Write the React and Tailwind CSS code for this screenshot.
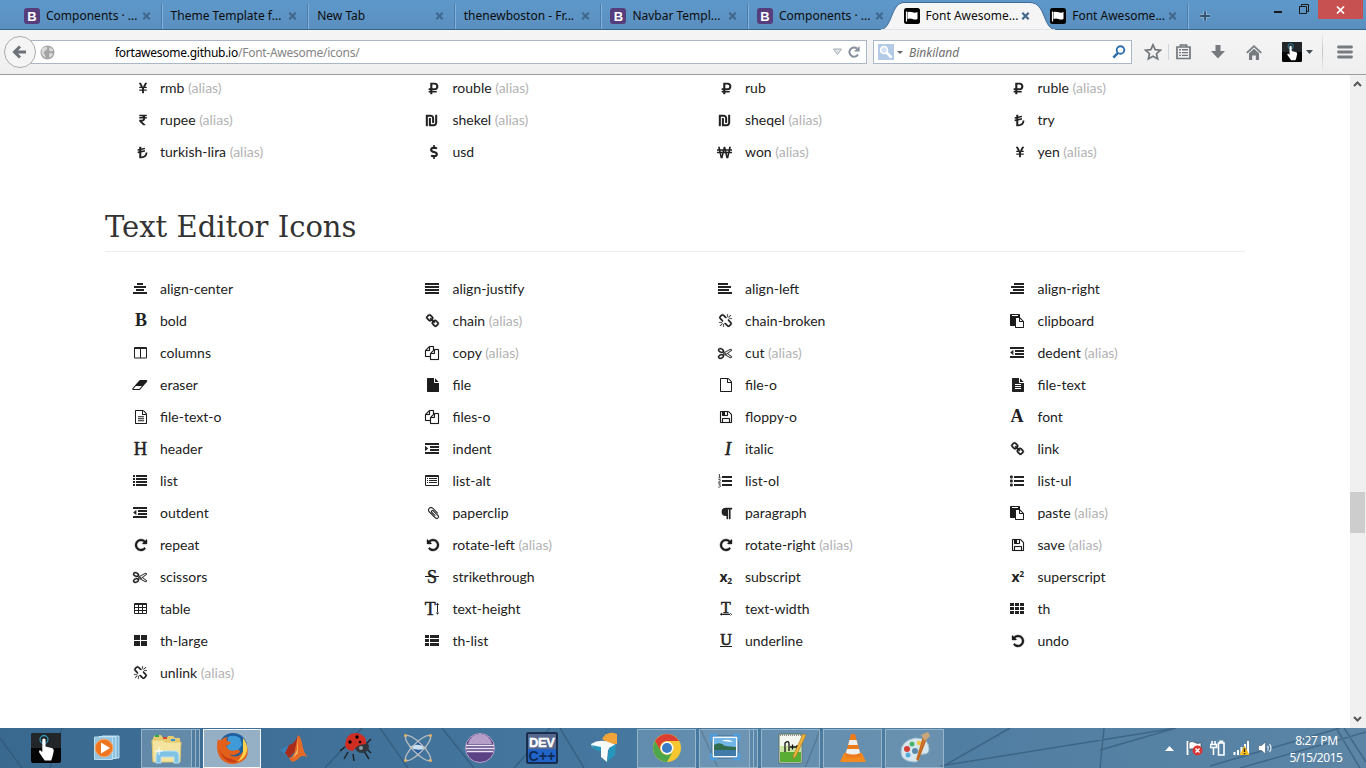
import React from "react";
import { FaYenSign, FaRubleSign, FaRupeeSign, FaShekelSign, FaLiraSign, FaDollarSign, FaWonSign, FaParagraph } from "react-icons/fa";

/* ---------- list glyphs, drawn in a 14 x 14 box ---------- */

const Box = ({ children }) => (
  <svg width="14" height="14" viewBox="0 0 14 14" className="block shrink-0 overflow-visible" fill="#222">
    {children}
  </svg>
);

const Big = ({ d, dx = 0, heavy = 0 }) => (
  <svg width="14" height="14" viewBox="0 0 1792 1792" className="block shrink-0 overflow-visible" fill="#1c1c1c" stroke="#1c1c1c" strokeWidth={heavy}>
    <path d={d} transform={`translate(${dx} 0)`} />
  </svg>
);

const Bars = ({ rows, children }) => (
  <Box>
    {rows.map(([x, w], i) => (
      <rect key={i} x={x} y={1 + i * 3} width={w} height="2" />
    ))}
    {children}
  </Box>
);

const Serif = ({ t, size = 15, x = 14, y = 12, weight = "bold", style = "normal", heavy = 0, children }) => (
  <Box>
    <text x={x} y={y} textAnchor="end" fontFamily="Liberation Serif, serif" fontSize={size} fontWeight={weight} fontStyle={style} stroke="#222" strokeWidth={heavy}>
      {t}
    </text>
    {children}
  </Box>
);

const Script = ({ small, dy }) => (
  <Box>
    <text x="1.6" y="11.5" fontFamily="Open Sans, sans-serif" fontSize="14" fontWeight="bold">x</text>
    <text x="9.2" y={dy} fontFamily="Open Sans, sans-serif" fontSize="8.500" fontWeight="bold">{small}</text>
  </Box>
);

const P = {
  file: "M1152 512v-472q22 14 36 28l408 408q14 14 28 36h-472zm-128 32q0 40 28 68t68 28h544v1056q0 40-28 68t-68 28h-1344q-40 0-68-28t-28-68v-1600q0-40 28-68t68-28h800v544z",
  fileO: "M1596 380q28 28 48 76t20 88v1152q0 40-28 68t-68 28h-1344q-40 0-68-28t-28-68v-1600q0-40 28-68t68-28h896q40 0 88 20t76 48zm-444-244v376h376q-10-29-22-41l-313-313q-12-12-41-22zm384 1528v-1024h-416q-40 0-68-28t-28-68v-416h-768v1536h1280z",
  lines: "M512 800h768v128h-768zM512 1056h768v128h-768zM512 1312h768v128h-768z",
  floppy: "M512 1536h768v-384h-768v384zm896 0h128v-896q0-14-10-38.5t-20-34.5l-281-281q-10-10-34-20t-39-10v416q0 40-28 68t-68 28h-576q-40 0-68-28t-28-68v-416h-128v1280h128v-416q0-40 28-68t68-28h832q40 0 68 28t28 68v416zm-384-928v-320q0-13-9.5-22.5t-22.5-9.5h-192q-13 0-22.5 9.5t-9.5 22.5v320q0 13 9.5 22.5t22.5 9.5h192q13 0 22.5-9.5t9.5-22.5zm640 32v928q0 40-28 68t-68 28h-1344q-40 0-68-28t-28-68v-1344q0-40 28-68t68-28h928q40 0 88 20t76 48l280 280q28 28 48 76t20 88z",
  chain: "M1520 1216q0-40-28-68l-208-208q-28-28-68-28-42 0-72 32 3 3 19 18.5t21.5 21.5 15 19 13 25.5 3.5 27.5q0 40-28 68t-68 28q-15 0-27.5-3.5t-25.5-13-19-15-21.5-21.5-18.5-19q-33 31-33 73 0 40 28 68l206 207q27 27 68 27 40 0 68-26l147-146q28-28 28-67zm-703-705q0-40-28-68l-206-207q-28-28-68-28-39 0-68 27l-147 146q-28 28-28 67 0 40 28 68l208 208q27 27 68 27 42 0 72-31-3-3-19-18.5t-21.5-21.5-15-19-13-25.5-3.5-27.5q0-40 28-68t68-28q15 0 27.5 3.5t25.5 13 19 15 21.5 21.5 18.5 19q33-31 33-73zm895 705q0 120-85 203l-147 146q-83 83-203 83-121 0-204-85l-206-207q-83-83-83-203 0-123 88-209l-88-88q-86 88-208 88-120 0-204-84l-208-208q-84-84-84-204t85-203l147-146q83-83 203-83 121 0 204 85l206 207q83 83 83 203 0 123-88 209l88 88q86-88 208-88 120 0 204 84l208 208q84 84 84 204z",
  broken: "M503 1271l-256 256q-10 9-23 9-12 0-23-9-9-10-9-23t9-23l256-256q10-9 23-9t23 9q9 10 9 23t-9 23zm169 41v320q0 14-9 23t-23 9-23-9-9-23v-320q0-14 9-23t23-9 23 9 9 23zm-224-224q0 14-9 23t-23 9h-320q-14 0-23-9t-9-23 9-23 23-9h320q14 0 23 9t9 23zm1264 128q0 120-85 203l-147 146q-83 83-203 83-121 0-204-85l-334-335q-21-21-42-56l239-18 273 274q28 28 68 28t68-27l147-146q28-28 28-67 0-40-28-68l-274-275 18-239q35 21 56 42l336 336q84 86 84 204zm-617-724l-239 18-273-274q-28-28-68-28-39 0-68 27l-147 146q-28 28-28 67 0 40 28 68l274 274-18 240q-35-21-56-42l-336-336q-84-86-84-204 0-120 85-203l147-146q83-83 203-83 121 0 204 85l334 335q21 21 42 56zm633 84q0 14-9 23t-23 9h-320q-14 0-23-9t-9-23 9-23 23-9h320q14 0 23 9t9 23zm-544-544v320q0 14-9 23t-23 9-23-9-9-23v-320q0-14 9-23t23-9 23 9 9 23zm407 151l-256 256q-11 9-23 9t-23-9q-9-10-9-23t9-23l256-256q10-9 23-9t23 9q9 10 9 23t-9 23z",
  copy: "M1696 384q40 0 68 28t28 68v1216q0 40-28 68t-68 28h-960q-40 0-68-28t-28-68v-288h-544q-40 0-68-28t-28-68v-672q0-40 20-88t48-76l408-408q28-28 76-48t88-20h416q40 0 68 28t28 68v328q68-40 128-40h416zm-544 213l-299 299h299v-299zm-640-384l-299 299h299v-299zm196 647l316-316v-416h-384v416q0 40-28 68t-68 28h-416v640h512v-256q0-40 20-88t48-76zm956 804v-1152h-384v416q0 40-28 68t-68 28h-416v640h896z",
  paste: "M768 1664h896v-640h-416q-40 0-68-28t-28-68v-416h-384v1152zm256-1440v-64q0-13-9.5-22.5t-22.5-9.5h-704q-13 0-22.5 9.5t-9.5 22.5v64q0 13 9.5 22.5t22.5 9.5h704q13 0 22.5-9.5t9.5-22.5zm256 672h299l-299-299v299zm512 128v672q0 40-28 68t-68 28h-960q-40 0-68-28t-28-68v-160h-544q-40 0-68-28t-28-68v-1344q0-40 28-68t68-28h1088q40 0 68 28t28 68v328q21 13 36 28l408 408q28 28 48 76t20 88z",
  eraser: "M960 1408l336-384h-768l-336 384h768zm1013-1077q15 34 9.5 71.5t-30.5 65.5l-896 1024q-38 44-96 44h-768q-38 0-69.5-20.5t-47.5-54.5q-15-34-9.5-71.5t30.5-65.5l896-1024q38-44 96-44h768q38 0 69.5 20.5t47.5 54.5z",
  cut: "M960 896q26 0 45 19t19 45-19 45-45 19-45-19-19-45 19-45 45-19zm300 64l507 398q28 20 25 56-5 35-35 51l-128 64q-13 7-29 7-17 0-31-8l-690-387-110 66q-8 4-12 5 14 49 10 97-7 77-56 147.5t-132 123.5q-132 84-277 84-136 0-222-78-90-84-79-207 7-76 56-147t131-124q132-84 278-84 83 0 151 31 9-13 22-22l122-73-122-73q-13-9-22-22-68 31-151 31-146 0-278-84-82-53-131-124t-56-147q-5-59 15.5-113t63.5-93q85-79 222-79 145 0 277 84 83 52 132 123t56 148q4 48-10 97 4 1 12 5l110 66 690-387q14-8 31-8 16 0 29 7l128 64q30 16 35 51 3 36-25 56zm-681-260q46-42 21-108t-106-117q-92-59-192-59-74 0-113 36-46 42-21 108t106 117q92 59 192 59 74 0 113-36zm-85 745q81-51 106-117t-21-108q-39-36-113-36-100 0-192 59-81 51-106 117t21 108q39 36 113 36 100 0 192-59zm178-613l96 58v-11q0-36 33-56l14-8-79-47-26 26q-3 3-10 11t-12 12q-2 2-4 3.5t-3 2.5zm224 224l96 32 736-576-128-64-768 431v113l-160 96 9 8q2 2 7 6 4 4 11 12t11 12l26 26zm704 416l128-64-520-408-177 138q-2 3-13 7z",
  clip: "M1596 1385q0 117-79 196t-196 79q-135 0-235-100l-777-776q-113-115-113-271 0-159 110-270t269-111q158 0 273 113l605 606q10 10 10 22 0 16-30.5 46.5t-46.5 30.5q-13 0-23-10l-606-607q-79-77-181-77-106 0-179 75t-73 181q0 105 76 181l776 777q63 63 145 63 64 0 106-42t42-106q0-82-63-145l-581-581q-26-24-60-24-29 0-48 19t-19 48q0 32 25 59l410 410q10 10 10 22 0 16-31 47t-47 31q-12 0-22-10l-410-410q-63-61-63-149 0-82 57-139t139-57q88 0 149 63l581 581q100 98 100 235z",
  repeat: "M1664 256v448q0 26-19 45t-45 19h-448q-42 0-59-40-17-39 14-69l138-138q-148-137-349-137-104 0-198.5 40.5t-163.5 109.5-109.5 163.5-40.5 198.5 40.5 198.5 109.5 163.5 163.5 109.5 198.5 40.5q119 0 225-52t179-147q7-10 23-12 15 0 25 9l137 138q9 8 9.5 20.5t-7.5 22.5q-109 132-264 204.5t-327 72.5q-156 0-298-61t-245-164-164-245-61-298 61-298 164-245 245-164 298-61q147 0 284.5 55.5t244.5 156.5l130-129q29-31 70-14 39 17 39 59z",
};

const Undo = () => (
  <svg width="14" height="14" viewBox="0 0 1792 1792" className="block shrink-0 overflow-visible" fill="#1c1c1c" stroke="#1c1c1c" strokeWidth="50">
    <path d={P.repeat} transform="translate(1920 0) scale(-1 1)" />
  </svg>
);

const full = [0, 14];
const ICONS = {
  yen: <FaYenSign size={12} className="-mr-[2px]" />,
  ruble: <FaRubleSign size={13} className="-mr-px" />,
  rupee: <FaRupeeSign size={12} className="-mr-[2px]" />,
  shekel: <FaShekelSign size={13} className="mr-px" />,
  lira: <FaLiraSign size={13} className="-mr-[2px]" />,
  usd: <FaDollarSign size={14} className="-mr-[2px]" />,
  won: <FaWonSign size={15} />,
  center: <Bars rows={[[4, 6], [1, 12], [3, 8], full]} />,
  justify: <Bars rows={[full, full, full, full]} />,
  left: <Bars rows={[[0, 10], [0, 13], [0, 11], full]} />,
  right: <Bars rows={[[4, 10], [1, 13], [3, 11], full]} />,
  bold: <Serif t="B" size={18} y={12} />,
  chain: <Big d={P.chain} dx={64} heavy={50} />,
  broken: <Big d={P.broken} dx={64} heavy={36} />,
  paste: <Big d={P.paste} />,
  columns: (
    <Box>
      <path fillRule="evenodd" d="M2 1H13Q14 1 14 2V11.5Q14 12.5 13 12.5H2Q1 12.5 1 11.5V2Q1 1 2 1ZM2 3V11.5H7V3ZM8 3V11.5H13V3Z" />
    </Box>
  ),
  copy: <Big d={P.copy} heavy={20} />,
  cut: <Big d={P.cut} heavy={40} />,
  outdent: (
    <Bars rows={[full, [5, 9], [5, 9], full]}>
      <path d="M3.4 3.8V9.2L0.2 6.5Z" />
    </Bars>
  ),
  indent: (
    <Bars rows={[full, [5, 9], [5, 9], full]}>
      <path d="M0 3.8V9.2L3.2 6.5Z" />
    </Bars>
  ),
  eraser: <Big d={P.eraser} dx={-160} />,
  file: <Big d={P.file} dx={128} />,
  fileO: <Big d={P.fileO} dx={128} />,
  fileTextO: <Big d={P.fileO + P.lines} dx={128} />,
  fileText: (
    <Box>
      <path transform="translate(1 0) scale(0.0078125)" d={P.file} />
      <path fill="#fff" transform="translate(1 -.2) scale(0.0078125)" d={P.lines} />
    </Box>
  ),
  floppy: <Big d={P.floppy} dx={128} heavy={16} />,
  font: <Serif t="A" size={18} y={12} x={13.6} />,
  header: <Serif t="H" size={18.5} weight="normal" x={14.2} y={13} heavy={0.5} />,
  italic: <Serif t="I" size={18} style="italic" weight="normal" x={13} y={13} heavy={0.7} />,
  list: (
    <Bars rows={[[3, 11], [3, 11], [3, 11], [3, 11]]}>
      {[1, 4, 7, 10].map((y) => <rect key={y} x="0" y={y} width="2" height="2" />)}
    </Bars>
  ),
  listAlt: (
    <Box>
      <path fillRule="evenodd" d="M1 1H13Q14 1 14 2V11Q14 12 13 12H1Q0 12 0 11V2Q0 1 1 1ZM1 3V11H13V3Z" />
      {[4, 6, 8].map((y) => <path key={y} d={`M2 ${y}h1v1h-1zM4 ${y}h8v1h-8z`} />)}
    </Box>
  ),
  listOl: (
    <Box>
      <path d="M4 2h10v2h-10zM4 6h10v2h-10zM4 10h10v2h-10z" />
      <path fill="none" stroke="#222" strokeWidth=".8" d="M.6.9 1.5.3V3.6M.4 3.8H2.8M.4 5.6Q2.6 4.8 2.4 6.2L.5 8.3H2.8M.3 9.8H2.4L1.4 11.2Q2.8 11.4 2.4 12.5 1.6 13.6.2 12.9" />
    </Box>
  ),
  listUl: (
    <Box>
      {[2, 6, 10].map((y) => (
        <g key={y}>
          <rect x="0" y={y - 0.4} width="2.8" height="2.8" rx="1" />
          <rect x="4" y={y} width="10" height="2" />
        </g>
      ))}
    </Box>
  ),
  clip: <Big d={P.clip} dx={192} heavy={20} />,
  paragraph: <FaParagraph size={13} className="-mr-px" />,
  repeat: <Big d={P.repeat} dx={128} heavy={50} />,
  undo: <Undo />,
  strike: (
    <Serif t="S" size={18} weight="normal" x={12} y={12.5} heavy={0.5}>
      <rect x="0" y="6" width="14" height="1" />
    </Serif>
  ),
  sub: <Script small="2" dy={13.5} />,
  sup: <Script small="2" dy={6.5} />,
  table: (
    <Box>
      <path fillRule="evenodd" d="M2 1H13Q14 1 14 2V11Q14 12 13 12H2Q1 12 1 11V2Q1 1 2 1ZM2 3V5H5V3ZM6 3V5H9V3ZM10 3V5H13V3ZM2 6V8H5V6ZM6 6V8H9V6ZM10 6V8H13V6ZM2 9V11H5V9ZM6 9V11H9V9ZM10 9V11H13V9Z" />
    </Box>
  ),
  textHeight: (
    <Serif t="T" size={18} weight="normal" x={10.7} y={12.5} heavy={0.5}>
      <path d="M12 2.500h1v8.500h-1zM12.500.7l1.600 2.400h-3.200zM12.500 12.800l1.600-2.400h-3.200z" />
    </Serif>
  ),
  textWidth: (
    <Serif t="T" size={16} weight="normal" x={12.900} y={10.500} heavy={0.5}>
      <path d="M3 11.700h10v1.200h-10zM1.700 12.200l2.200-1.500v3zM14.200 12.200l-2.200-1.500v3z" />
    </Serif>
  ),
  th: (
    <Box>
      {[1, 5, 9].map((y) => <path key={y} d={`M0 ${y}h4v3h-4zM5 ${y}h4v3h-4zM10 ${y}h4v3h-4z`} />)}
    </Box>
  ),
  thLarge: (
    <Box>
      <path d="M1 1h6v5h-6zM8 1h6v5h-6zM1 7h6v5h-6zM8 7h6v5h-6z" />
    </Box>
  ),
  thList: (
    <Box>
      {[1, 5, 9].map((y) => <path key={y} d={`M0 ${y}h4v3h-4zM5 ${y}h9v3h-9z`} />)}
    </Box>
  ),
  underline: (
    <Serif t="U" size={16} weight="normal" x={13.8} y={10.8} heavy={0.6}>
      <rect x="2" y="12" width="12" height="1" />
    </Serif>
  ),
};

const CURRENCY = [
  ["yen", "rmb", 1], ["ruble", "rouble", 1], ["ruble", "rub"], ["ruble", "ruble", 1],
  ["rupee", "rupee", 1], ["shekel", "shekel", 1], ["shekel", "sheqel", 1], ["lira", "try"],
  ["lira", "turkish-lira", 1], ["usd", "usd"], ["won", "won", 1], ["yen", "yen", 1],
];

const EDITOR = [
  ["center", "align-center"], ["justify", "align-justify"], ["left", "align-left"], ["right", "align-right"],
  ["bold", "bold"], ["chain", "chain", 1], ["broken", "chain-broken"], ["paste", "clipboard"],
  ["columns", "columns"], ["copy", "copy", 1], ["cut", "cut", 1], ["outdent", "dedent", 1],
  ["eraser", "eraser"], ["file", "file"], ["fileO", "file-o"], ["fileText", "file-text"],
  ["fileTextO", "file-text-o"], ["copy", "files-o"], ["floppy", "floppy-o"], ["font", "font"],
  ["header", "header"], ["indent", "indent"], ["italic", "italic"], ["chain", "link"],
  ["list", "list"], ["listAlt", "list-alt"], ["listOl", "list-ol"], ["listUl", "list-ul"],
  ["outdent", "outdent"], ["clip", "paperclip"], ["paragraph", "paragraph"], ["paste", "paste", 1],
  ["repeat", "repeat"], ["undo", "rotate-left", 1], ["repeat", "rotate-right", 1], ["floppy", "save", 1],
  ["cut", "scissors"], ["strike", "strikethrough"], ["sub", "subscript"], ["sup", "superscript"],
  ["table", "table"], ["textHeight", "text-height"], ["textWidth", "text-width"], ["th", "th"],
  ["thLarge", "th-large"], ["thList", "th-list"], ["underline", "underline"], ["undo", "undo"],
  ["broken", "unlink", 1],
];

const IconGrid = ({ items }) => (
  <ul className="ml-[115px] grid w-[1170px] grid-cols-[292px_293px_292px_293px] font-['Lato','Open_Sans',sans-serif] text-[14px] text-[#222]">
    {items.map(([icon, name, alias], i) => (
      <li key={i} className="flex h-8 items-center">
        <span className={`flex w-8 shrink-0 justify-end ${i % 2 ? "mr-[13.5px]" : "mr-[13px]"}`}>{ICONS[icon]}</span>
        <span className="whitespace-nowrap leading-5">
          {name}
          {alias && <span className="text-[#b3b3b3]"> (alias)</span>}
        </span>
      </li>
    ))}
  </ul>
);

/* ---------- browser chrome ---------- */

const BootstrapMark = () => (
  <span className="mr-[6px] flex h-4 w-4 shrink-0 items-center justify-center rounded-[3px] bg-[#563d7c] font-['Liberation_Sans',sans-serif] text-[13px] font-bold leading-none text-white">B</span>
);

const FlagMark = () => (
  <svg width="16" height="16" viewBox="0 0 16 16" className="mr-[6px] shrink-0">
    <rect width="16" height="16" rx="2.5" fill="#000" />
    <path d="M2.500 3.500v10" stroke="#fff" strokeWidth="1.200" />
    <path d="M3.500 4q2.500-.8 5 .2t5-.2v7q-2.500 1-5 0t-5 0z" fill="#fff" />
  </svg>
);

const Close = () => (
  <svg width="9" height="8" viewBox="0 0 9 8" className="shrink-0">
    <path d="M1.3 .8L7.7 7.2M7.7 .8L1.3 7.2" stroke="#41688c" strokeWidth="2.2" />
  </svg>
);

const TABS = [
  ["b", "Components · ..."], [null, "Theme Template f..."], [null, "New Tab"], [null, "thenewboston - Fr..."],
  ["b", "Navbar Templ..."], ["b", "Components · ..."], ["f", "Font Awesome..."], ["f", "Font Awesome..."],
];

const TabStrip = () => (
  <div className="relative flex h-[30px] border-b border-[#34648f] bg-gradient-to-b from-[#5e98ca] to-[#5a90c0] pl-[15px]">
    <svg width="180" height="30" viewBox="0 0 180 30" className="absolute left-[879px] top-0">
      <path d="M0 30C14 30 11 3 25 2.5H151C168 3 163 30 178 30Z" fill="#f5f5f5" stroke="#3c6c98" strokeWidth="1" />
      <path d="M2 30H176" stroke="#f5f5f5" strokeWidth="1.5" />
    </svg>
    {TABS.map(([icon, label], i) => (
      <div key={i} className="relative flex h-[29px] w-[146.6px] items-center pl-[9px] pr-[11px] pt-[3px]">
        {icon === "b" && <BootstrapMark />}
        {icon === "f" && <FlagMark />}
        <span className="flex-1 whitespace-nowrap text-[12px] leading-4 text-[#0c0c0c]">{label}</span>
        <Close />
        {i !== 5 && i !== 6 && <span className="absolute -right-px top-1 h-[25px] w-[2px] border-l border-[#4b7dab] bg-[#82b2dc]" />}
      </div>
    ))}
    <svg width="12" height="12" viewBox="0 0 12 12" className="ml-[11px] mt-[10px]">
      <path d="M6 1v10M1 6h10" stroke="#8fb6d8" strokeWidth="3.6" />
      <path d="M6 1.2v9.6M1.2 6h9.6" stroke="#35526e" strokeWidth="1.8" />
    </svg>
    <div className="ml-auto flex">
      <svg width="50" height="20" viewBox="0 0 50 20">
        <path d="M6 12h8" stroke="#1a1a1a" strokeWidth="2" />
        <path d="M31.5 6.500h7v7h-7zM33.500 6V4.500h7v7H39" fill="none" stroke="#1a1a1a" />
      </svg>
      <div className="mr-[3px] flex h-[19px] w-[45px] items-center justify-center bg-[#c75050]">
        <svg width="9" height="8" viewBox="0 0 9 8"><path d="M1 .5l7 7M8 .5l-7 7" stroke="#fff" strokeWidth="1.7" /></svg>
      </div>
    </div>
  </div>
);

const Hand = ({ size }) => (
  <svg width={size} height={size} viewBox="0 0 30 30" className="shrink-0">
    <rect width="30" height="30" rx="2" fill="#050505" />
    <path d="M0 2a2 2 0 012-2h26a2 2 0 012 2v13H0z" fill="#222629" />
    <circle cx="13" cy="6.5" r="4" fill="none" stroke="#2f8fae" strokeWidth="1.3" />
    <path d="M11.300 6.500q1.700-2 3.200 0v7l7 1.700q1.500.8 1.200 3l-1.300 5.800-1.200 3.500h-6.500l-5.500-8q-.8-2.200 1-2.300l2.100 1.800z" fill="#fff" />
  </svg>
);

const Toolbar = () => (
  <div className="flex h-[45px] items-center border-b border-[#9c9c9c] bg-gradient-to-b from-[#f5f5f5] to-[#efefef] pl-[4px]">
    <div className="relative z-10 flex h-8 w-8 shrink-0 items-center justify-center rounded-full border border-[#aaadb0] bg-[#f5f5f5]">
      <svg width="16" height="16" viewBox="0 0 16 16"><path d="M2 8h12M8 2.500L2.500 8 8 13.500" fill="none" stroke="#6d7278" strokeWidth="3" /></svg>
    </div>
    <div className="-ml-[5px] flex h-6 w-[836px] shrink-0 items-center border border-[#aab7c7] bg-white pl-[8px] pr-[6px]">
      <svg width="15" height="15" viewBox="0 0 15 15">
        <circle cx="7.5" cy="7.5" r="7" fill="#a4a4a4" />
        <path d="M2 3.500L6 1.500 7.500 3 6 5.500 3.500 7 4.500 9 6 13 2.500 10.500 1.500 7ZM9.500 2L13 4.500 13 6 10 6.500 9 4.500ZM9 8.500L12.500 8 12.500 10.500 9.500 13Z" fill="#dadada" />
      </svg>
      <span className="ml-[60px] flex-1 whitespace-nowrap pt-[2px] text-[12px] leading-4 tracking-[-0.26px] text-[#858585]"><span className="text-black">fortawesome.github.io</span>/Font-Awesome/icons/</span>
      <svg width="28" height="12" viewBox="0 0 28 12">
        <path d="M1.500 3h8l-4 5.500z" fill="#dfe3e8" stroke="#a3acb7" />
        <path d="M26 8.500A4.600 4.600 0 1125 2.600" fill="none" stroke="#85909c" strokeWidth="2" />
        <path d="M27.600 0v5.600h-5.600z" fill="#85909c" />
      </svg>
    </div>
    <div className="ml-[6px] flex h-6 w-[259px] shrink-0 items-center border border-[#aab7c7] bg-white pl-1 pr-[5px]">
      <svg width="16" height="16" viewBox="0 0 16 16">
        <rect width="16" height="16" fill="#b4cbe8" />
        <circle cx="6" cy="6" r="3.5" fill="#d3e2f5" stroke="#fff" strokeWidth="1.5" />
        <path d="M8.500 8.500l5 5" stroke="#fff" strokeWidth="2.5" />
      </svg>
      <svg width="6" height="3" viewBox="0 0 6 3" className="ml-[3px]"><path d="M0 0h6L3 3z" fill="#666" /></svg>
      <span className="ml-[6px] flex-1 pt-[2px] text-[12px] italic leading-4 text-[#6e6e6e]">Binkiland</span>
      <svg width="14" height="14" viewBox="0 0 14 14">
        <circle cx="8.5" cy="5" r="3.8" fill="none" stroke="#2c6fae" strokeWidth="1.9" />
        <path d="M6 7.800L1.300 12.600" stroke="#2c6fae" strokeWidth="2.5" />
      </svg>
    </div>
    <svg width="18" height="18" viewBox="0 0 18 18" className="ml-[12px] shrink-0">
      <path d="M9 1.800l2.200 4.800 5.200.6-3.900 3.500 1.100 5.200L9 13.300l-4.600 2.600 1.100-5.200L1.600 7.200l5.200-.6z" fill="none" stroke="#72777c" strokeWidth="1.7" />
    </svg>
    <span className="ml-[6px] h-4 w-px bg-[#cdd5de]" />
    <svg width="15" height="16" viewBox="0 0 15 16" className="ml-[7px] shrink-0">
      <path d="M1 3h13v11.500H1zM4.500 3V1h6v2" fill="none" stroke="#72777c" strokeWidth="1.7" />
      <path d="M3 5.800h2M6 5.800h6M3 8.600h2M6 8.600h6M3 11.400h2M6 11.400h6" stroke="#72777c" strokeWidth="1.4" />
    </svg>
    <svg width="14" height="14" viewBox="0 0 14 14" className="ml-[20px] shrink-0"><path d="M4.500 0h5v6H14L7 13.500 0 6h4.500z" fill="#777b80" /></svg>
    <svg width="16" height="15" viewBox="0 0 16 15" className="ml-[21px] shrink-0">
      <path d="M.8 7.800L8 1.200l7.200 6.600" fill="none" stroke="#777b80" strokeWidth="1.8" />
      <path d="M3 8.200L8 3.800l5 4.400V15H9.800v-4.500H6.200V15H3z" fill="#777b80" />
    </svg>
    <span className="ml-[20px]"><Hand size={20} /></span>
    <svg width="7" height="4" viewBox="0 0 7 4" className="ml-[4px]"><path d="M0 0h7L3.500 4z" fill="#444b52" /></svg>
    <span className="ml-[9px] h-10 w-px bg-gradient-to-b from-transparent via-[#c0c4c8] to-transparent" />
    <svg width="16" height="14" viewBox="0 0 16 14" className="ml-[14px]"><path d="M1.500 2h13M1.500 7h13M1.500 12h13" stroke="#777b80" strokeWidth="2.8" strokeLinecap="round" /></svg>
  </div>
);

const Scrollbar = () => (
  <div className="flex w-4 flex-col items-center bg-[#f0f0f0] py-[6px]">
    <svg width="9" height="6" viewBox="0 0 9 6" className="mr-px"><path d="M1 5l3.500-3.500L8 5" fill="none" stroke="#555" strokeWidth="2" /></svg>
    <div className="mt-[405px] h-[41px] w-4 border-r border-[#f0f0f0] bg-[#cdcdcd]" />
    <svg width="9" height="6" viewBox="0 0 9 6" className="mr-px mt-auto"><path d="M1 1l3.500 3.500L8 1" fill="none" stroke="#555" strokeWidth="2" /></svg>
  </div>
);

/* ---------- taskbar ---------- */

const S = ({ children }) => (
  <svg width="32" height="32" viewBox="0 0 32 32" className="shrink-0">{children}</svg>
);

const Player = () => (
  <S>
    <path d="M11 4h17v22H11z" fill="#7fb5d8" stroke="#bfe0f2" />
    <path d="M8 4.500h17v22H8z" fill="#8fc3e3" stroke="#cbe8f6" />
    <path d="M3.500 5h18v22.500h-18z" fill="#92c3e1" stroke="#b9dcef" />
    <circle cx="13" cy="16" r="8.8" fill="#ee7622" stroke="#f8a661" />
    <path d="M10 10.500v11l9-5.500z" fill="#fff" />
  </S>
);
const Explorer = () => (
  <S>
    <path d="M2 6l2-3h6l2 3h4l1-2h5l2 2h5v22H2z" fill="#e6cc6f" />
    <path d="M4 3h4v2H4z" fill="#2da84a" /><path d="M12 5h4v2h-4z" fill="#d9452f" /><path d="M20 7h4v2h-4z" fill="#3293d8" />
    <path d="M1 8h11l2 2h16l-1 20H2z" fill="#f5e4a0" stroke="#dfc46a" />
    <path d="M5 31v-7q0-5 5-5h13q5 0 5 5v7h-5v-6H10v6z" fill="#80c2e4" stroke="#b8e2f4" />
    <path d="M8 15v8M4 19h8" stroke="#fff" />
  </S>
);
const Firefox = () => (
  <S>
    <circle cx="17" cy="15" r="14" fill="#1e5f9f" />
    <path d="M12 5q6-3 12 1l2 7-6 8-9-3z" fill="#3f9bd8" />
    <path d="M2 7q1 2 3 1 3-3 7-3-2 2-1 4l4 1-1 2-4 2 2 3q3 3 8 1 4-1 4 2-5 5-11 2 6 5 12 0 5-5 3-13l3 5q3 11-6 16-12 5-20-3-6-8-3-20z" fill="#e2601a" />
    <path d="M27 6q5 6 4 13-2 8-10 11 7-7 6-14z" fill="#fbd04a" />
    <path d="M3 17q4 9 13 10l6 3q-14 3-19-13z" fill="#c93d17" />
  </S>
);
const Matlab = () => (
  <S>
    <path d="M2 18l9-5 6 3-6 10z" fill="#3c82b8" /><path d="M11 13q6-1 9-10l-2 15-7 8-4-5z" fill="#a82b1c" />
    <path d="M20 3q3 1 5 13 2 7 5 9-5-2-8 0-3 4-8 5l-3-4q5-1 6-8z" fill="#e56a27" /><path d="M20 3l-1 15-4 8 5-5z" fill="#f7b15a" />
  </S>
);
const Ladybug = () => (
  <S>
    <path d="M5 15l-5 4M8 20l-4 7M13 22l1 7M26 16l5 5M24 19l5 8M27 11l4-4" stroke="#1d2529" strokeWidth="1.5" />
    <ellipse cx="22" cy="15" rx="7" ry="6" fill="#30383d" />
    <path d="M5 12Q7 0 17 1q10 2 9 11-9 0-13 7-8-1-8-7z" fill="#cf2c22" />
    <circle cx="10" cy="10" r="1.7" /><circle cx="17" cy="5" r="1.7" /><circle cx="20" cy="10" r="1.3" />
    <circle cx="21" cy="16" r="2" fill="#8e9ea7" />
  </S>
);
const Atom = () => (
  <S>
    <circle cx="16" cy="16" r="6.5" fill="#2b5f9c" /><path d="M7 15q9-5 18 1-9 4-18-1z" fill="#cbdff2" />
    <g fill="none" stroke="#b6bdc2" strokeWidth="1.4"><ellipse cx="16" cy="16" rx="17" ry="5" transform="rotate(45 16 16)" /><ellipse cx="16" cy="16" rx="17" ry="5" transform="rotate(-45 16 16)" /></g>
    <g fill="#e9b260"><circle cx="3.500" cy="3.500" r="1.5" /><circle cx="28.5" cy="3.500" r="1.5" /><circle cx="3.500" cy="28.5" r="1.5" /><circle cx="28.5" cy="28.5" r="1.5" /></g>
  </S>
);
const Eclipse = () => (
  <S>
    <circle cx="16" cy="16" r="14.5" fill="#5b4385" stroke="#b7a5c9" />
    <path d="M4 12Q7 2 16 2t12 10z" fill="#b6a0c9" />
    <path d="M2 13.500h28M2 16.500h28M3 19.500h26" stroke="#ece6f1" strokeWidth="1.500" />
  </S>
);
const Dev = () => (
  <S>
    <rect x="1" y="1" width="30" height="30" rx="1" fill="#2263c8" stroke="#101a2c" strokeWidth="1.5" /><rect x="2" y="2" width="28" height="15" fill="#57688f" />
    <text x="16" y="15" textAnchor="middle" fontFamily="Liberation Sans, sans-serif" fontSize="13" fontWeight="bold" fill="#fff" stroke="#fff" strokeWidth=".4" textLength="26">DEV</text>
    <text x="16" y="29" textAnchor="middle" fontFamily="Liberation Sans, sans-serif" fontSize="14" fontWeight="bold" fill="#0d2b55" textLength="27">C++</text>
  </S>
);
const TwoTone = () => (
  <S>
    <path d="M14 7q5-9 15-5v10q-7 1-15-5z" fill="#f2a33a" />
    <path d="M3 12q9-6 20-1l5 2-8 5-1 12-6-5V17l-9-2z" fill="#f7fafb" />
    <path d="M21 16l7-4-1 11-8 7zM3 13l10 2v4q-6 0-10-6z" fill="#2696bd" />
  </S>
);
const Chrome = () => (
  <S>
    <circle cx="16" cy="16" r="14" fill="#f6c72f" />
    <path d="M3.900 9A14 14 0 0128.100 9H16a7 7 0 00-6 10.500z" fill="#dc3f32" />
    <path d="M3.900 9A14 14 0 0016 30l6-10.500a7 7 0 01-12 0z" fill="#4ca64b" />
    <circle cx="16" cy="16" r="6.5" fill="#fff" /><circle cx="16" cy="16" r="5" fill="#3a7bc3" />
  </S>
);
const Picture = () => (
  <S>
    <path d="M3 4h26v22H3z" fill="#f4f8fa" stroke="#356f9e" /><path d="M5 6h22v18H5z" fill="#72b6e8" />
    <path d="M5 13q6-4 11 1l11 1v3H5z" fill="#326c4e" /><path d="M5 18h22v6H5z" fill="#407baa" /><path d="M13 9q6-3 11 1z" fill="#fff" />
    <path d="M2 9V3h6M24 3h6v6M30 21v6h-6M8 27H2v-6" fill="none" stroke="#4f9ddb" strokeWidth="2.5" />
  </S>
);
const Notepad = () => (
  <S>
    <path d="M4 2h23v29H4z" fill="#f4f7f0" stroke="#61735f" /><path d="M5 20h21v10H5z" fill="#58ad32" /><path d="M5 14h21v6H5z" fill="#c9e6a0" />
    <path d="M5 3h21" stroke="#89938a" strokeDasharray="1 1" strokeWidth="2" />
    <path d="M10 20v-9q4-3 4 1v7M15 15h5M17.500 12.500v5M20 15h4M22 13v4" fill="none" stroke="#111" strokeWidth="1.3" />
    <path d="M28 2l3 1-10 21-3 3 .5-4z" fill="#f0b63b" stroke="#b57a22" strokeWidth=".7" />
  </S>
);
const Cone = () => (
  <S>
    <path d="M7 21h18l4 9H3z" fill="#f28a1e" /><path d="M14 2h4l6 22q-8 4-16 0z" fill="#ee7b1b" />
    <path d="M12.500 8h7l1.300 5H11.200zM10 17h12l1.200 4q-7 3-14.400 0z" fill="#edf0ef" />
  </S>
);
const Palette = () => (
  <S>
    <path d="M16 6q14 0 14 11 0 5-5 5-5 0-5 4 0 4-5 4Q2 29 2 20 2 9 16 6z" fill="#d8e6ee" stroke="#a1bfd0" />
    <circle cx="16" cy="19" r="3" fill="#5b8aaa" /><circle cx="8" cy="17" r="3" fill="#d43f36" /><circle cx="13" cy="12" r="2.5" fill="#4ab36a" />
    <circle cx="9" cy="23" r="2.5" fill="#58acd9" /><circle cx="20" cy="11" r="2.2" fill="#f0c544" />
    <path d="M27 7L19 28l-1-1 6-20z" fill="#d97b2b" stroke="#c26720" strokeWidth="1.5" /><path d="M22 3l7-3 2 4-5 5z" fill="#cda678" />
  </S>
);

const TASKS = [
  ["w-[62px]", <Hand size={30} />], ["w-[60px]", <Player />],
  ["ml-1 w-[59px]", <Explorer />, "stack"], ["w-[58px]", <Firefox />, "active"],
  ["w-[62px]", <Matlab />], ["w-[62px]", <Ladybug />], ["w-[62px]", <Atom />], ["w-[62px]", <Eclipse />], ["w-[62px]", <Dev />], ["w-[62px]", <TwoTone />],
  ["ml-[2px] w-[59px]", <Chrome />, "open"], ["w-[59px]", <Picture />, "stack"], ["w-[59px]", <Notepad />, "open"], ["w-[59px]", <Cone />, "open"], ["w-[59px]", <Palette />, "open"],
];

const Task = ({ w, icon, kind }) => {
  if (kind === "stack")
    return (
      <div className={`mr-[3px] flex h-[39px] shrink-0 ${w}`}>
        <div className="flex flex-1 items-center justify-center border border-[#97b4c9] bg-white/20">{icon}</div>
        <div className="w-1 border-y border-r border-[#97b4c9] bg-white/10" />
        <div className="w-1 border-y border-r border-[#97b4c9] bg-white/10" />
      </div>
    );
  const look =
    kind === "active" ? "mr-[2px] border border-white/90 bg-white/45" : kind === "open" ? "mr-[3px] border border-[#97b4c9] bg-white/15" : "";
  return <div className={`flex h-[39px] shrink-0 items-center justify-center ${w} ${look}`}>{icon}</div>;
};

const Taskbar = () => (
  <div className="relative flex h-10 items-center bg-gradient-to-r from-[#3a6990] via-[#4779a0] to-[#5c85a5] pl-[15px]">
    <svg width="1366" height="40" viewBox="0 0 1366 40" className="absolute left-0 top-0" fill="none" stroke="#2c5070" strokeOpacity=".55" strokeWidth="1.5">
      <path d="M0 10l22 30M62 0L50 40M325 40L362 0M380 0l28 40M442 0l32 40M514 40l36-40M560 0l24 40M700 0l18 40M805 40l16-40M940 40L1010 0M1104 0l-4 40M940 38L1176 0M1100 22L1176 0M1210 38L1340 0M1336 0l24 40M1344 0l22 34M1240 40l126-36" />
    </svg>
    <div className="relative flex items-center">
      {TASKS.map(([w, icon, kind], i) => <Task key={i} w={w} icon={icon} kind={kind} />)}
    </div>
    <div className="relative ml-auto flex items-center pr-[23px]">
      <svg width="9" height="5" viewBox="0 0 9 5"><path d="M0 5L4.500 0 9 5z" fill="#fff" /></svg>
      <svg width="17" height="16" viewBox="0 0 17 16" className="ml-[12px]">
        <path d="M1.500 1v14" stroke="#fff" strokeWidth="1.8" /><path d="M3 2.500q3-2 6 0t6 0v7q-3 1.500-6 0t-6 0z" fill="#fff" stroke="#233848" strokeWidth=".6" />
        <circle cx="11.5" cy="10.5" r="5" fill="#d93535" /><path d="M9.500 8.500l4 4M13.500 8.500l-4 4" stroke="#fff" strokeWidth="1.5" />
      </svg>
      <svg width="16" height="16" viewBox="0 0 16 16" className="ml-[7px]" fill="none" stroke="#fff" strokeWidth="1.600">
        <path d="M8.500 3h5.500v12H8.500zM10 3V1.200h2.500V3M2 1v3M5 1v3M.5 4.500h6v3h-6zM3.500 8v7" />
      </svg>
      <svg width="17" height="16" viewBox="0 0 17 16" className="ml-[7px]">
        <path d="M.5 12h2v3h-2zM4 10h2v5H4zM7.500 7h2v8h-2zM11 4h2v11h-2zM14 1h2v14h-2z" fill="#fff" />
        <path d="M11.500 5.500L16.500 15h-10z" fill="#f8bb20" /><path d="M11.500 8.500v3.500M11.500 13v1.200" stroke="#222" strokeWidth="1.4" />
      </svg>
      <svg width="15" height="14" viewBox="0 0 15 14" className="ml-[8px]">
        <path d="M.5 4.500h3L7.500 1v12l-4-3.500h-3z" fill="#fff" stroke="#2d4b61" strokeWidth=".5" /><path d="M9.500 5q1.500 2 0 4.500M11.500 3.200q3 3.800 0 7.800" fill="none" stroke="#e9f1f5" strokeWidth="1.2" />
      </svg>
      <div className="ml-[17px] w-[53px] pt-[2px] text-center text-[12px] leading-[17px] text-white">
        <div className="whitespace-nowrap tracking-[-0.35px]">8:27 PM</div>
        <div className="-ml-[1px] whitespace-nowrap tracking-[-0.45px]">5/15/2015</div>
      </div>
    </div>
  </div>
);

export default function App() {
  return (
    <div className="flex h-[768px] w-[1366px] flex-col overflow-hidden bg-white font-['Noto_Sans','Open_Sans',sans-serif]">
      <TabStrip />
      <Toolbar />
      <div className="flex h-[653px] overflow-hidden">
        <main className="flex-1">
          <div className="-mt-[3px]"><IconGrid items={CURRENCY} /></div>
          <h2 className="mb-[21px] ml-[105px] mr-[105px] flex h-[84px] items-end whitespace-nowrap border-b border-[#eee] pb-[5px] font-['DejaVu_Serif',serif] text-[29px] leading-[38px] text-[#333]">Text Editor Icons</h2>
          <IconGrid items={EDITOR} />
        </main>
        <Scrollbar />
      </div>
      <Taskbar />
    </div>
  );
}
